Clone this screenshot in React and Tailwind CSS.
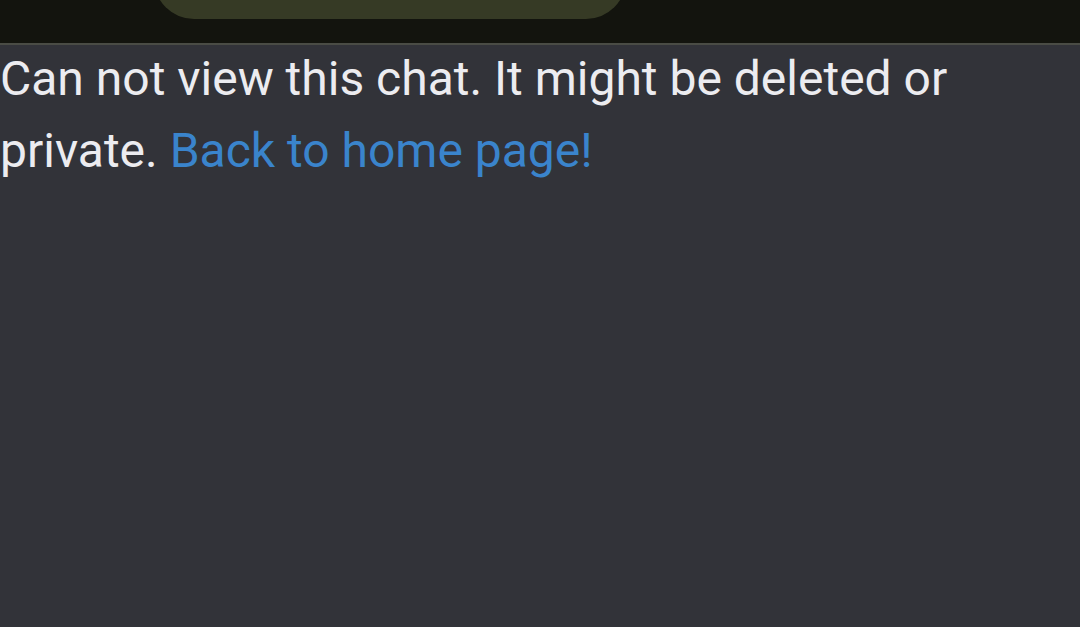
export default function App() {
  return (
    <div className="w-[1080px] h-[627px] bg-[#323339] flex flex-col overflow-hidden" style={{ fontFamily: "Roboto, 'Noto Sans', sans-serif" }}>
      <header className="h-[45px] shrink-0 bg-[#13140e] border-b-2 border-[#4a4c45] flex items-start overflow-hidden">
        {/* search pill, partly scrolled off the top */}
        <div className="ml-[154px] w-[472px] h-[80px] -mt-[61px] bg-[#363a25] rounded-[40px]" />
      </header>
      <p className="text-[48px] leading-[72px] text-[#ececf0] -mt-[2px]">
        Can not view this chat. It might be deleted or private.{" "}
        <a href="#" className="text-[#3a84cc]">Back to home page!</a>
      </p>
    </div>
  );
}
